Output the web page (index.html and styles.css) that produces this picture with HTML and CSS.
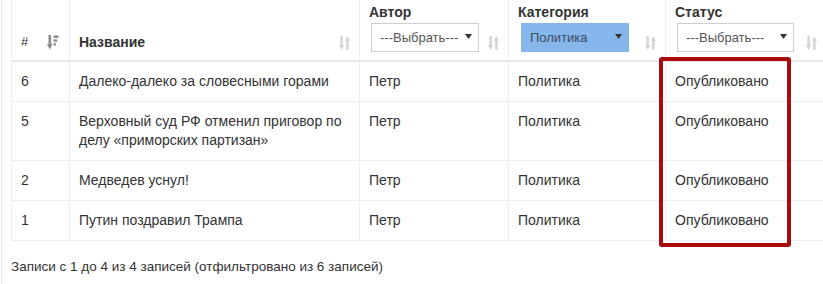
FILE: index.html
```html
<!DOCTYPE html>
<html lang="ru">
<head>
<meta charset="utf-8">
<title>Записи</title>
<link rel="stylesheet" href="styles.css">
</head>
<body>
<div class="page">
  <div class="wrap">
    <table class="grid">
      <colgroup>
        <col class="w-num">
        <col class="w-title">
        <col class="w-author">
        <col class="w-cat">
        <col class="w-status">
      </colgroup>
      <thead>
        <tr>
          <th class="th-num">
            <div class="th-row">
              <span class="hash">#</span>
              <svg class="ico-attr" width="12" height="15" viewBox="0 0 12 15"><rect x="1.5" y="0" width="2.6" height="10" fill="#8a8a8a"/><polygon points="0,9 5.6,9 2.8,14.5" fill="#8a8a8a"/><rect x="6.5" y="0.5" width="5" height="2.4" fill="#8a8a8a"/><rect x="6.5" y="4.3" width="3.8" height="2.4" fill="#8a8a8a"/><rect x="6.5" y="8.1" width="2.4" height="2.4" fill="#8a8a8a"/></svg>
            </div>
          </th>
          <th>
            <div class="th-row">
              <span class="th-title">Название</span>
              <svg class="ico-sort" width="11" height="14" viewBox="0 0 11 14"><rect x="1.4" y="0" width="2.4" height="9.5" fill="#d4d4d4"/><polygon points="0,9 5.2,9 2.6,14" fill="#d4d4d4"/><rect x="7.2" y="4.5" width="2.4" height="9.5" fill="#d4d4d4"/><polygon points="5.8,5 11,5 8.4,0" fill="#d4d4d4"/></svg>
            </div>
          </th>
          <th>
            <div class="th-title">Автор</div>
            <div class="th-row">
              <div class="pick"><span>---Выбрать---</span><svg class="caret" width="7" height="5" viewBox="0 0 7 5"><polygon points="0,0 7,0 3.5,5" fill="#333"/></svg></div>
              <svg class="ico-sort" width="11" height="14" viewBox="0 0 11 14"><rect x="1.4" y="0" width="2.4" height="9.5" fill="#d4d4d4"/><polygon points="0,9 5.2,9 2.6,14" fill="#d4d4d4"/><rect x="7.2" y="4.5" width="2.4" height="9.5" fill="#d4d4d4"/><polygon points="5.8,5 11,5 8.4,0" fill="#d4d4d4"/></svg>
            </div>
          </th>
          <th>
            <div class="th-title">Категория</div>
            <div class="th-row">
              <div class="pick pick-on"><span>Политика</span><svg class="caret" width="7" height="5" viewBox="0 0 7 5"><polygon points="0,0 7,0 3.5,5" fill="#333"/></svg></div>
              <svg class="ico-sort" width="11" height="14" viewBox="0 0 11 14"><rect x="1.4" y="0" width="2.4" height="9.5" fill="#d4d4d4"/><polygon points="0,9 5.2,9 2.6,14" fill="#d4d4d4"/><rect x="7.2" y="4.5" width="2.4" height="9.5" fill="#d4d4d4"/><polygon points="5.8,5 11,5 8.4,0" fill="#d4d4d4"/></svg>
            </div>
          </th>
          <th>
            <div class="th-title">Статус</div>
            <div class="th-row">
              <div class="pick pick-wide"><span>---Выбрать---</span><svg class="caret" width="7" height="5" viewBox="0 0 7 5"><polygon points="0,0 7,0 3.5,5" fill="#333"/></svg></div>
              <svg class="ico-sort" width="11" height="14" viewBox="0 0 11 14"><rect x="1.4" y="0" width="2.4" height="9.5" fill="#d4d4d4"/><polygon points="0,9 5.2,9 2.6,14" fill="#d4d4d4"/><rect x="7.2" y="4.5" width="2.4" height="9.5" fill="#d4d4d4"/><polygon points="5.8,5 11,5 8.4,0" fill="#d4d4d4"/></svg>
            </div>
          </th>
        </tr>
      </thead>
      <tbody>
        <tr><td>6</td><td>Далеко-далеко за словесными горами</td><td>Петр</td><td>Политика</td><td>Опубликовано</td></tr>
        <tr><td>5</td><td>Верховный суд РФ отменил приговор по делу «приморских партизан»</td><td>Петр</td><td>Политика</td><td>Опубликовано</td></tr>
        <tr><td>2</td><td>Медведев уснул!</td><td>Петр</td><td>Политика</td><td>Опубликовано</td></tr>
        <tr><td>1</td><td>Путин поздравил Трампа</td><td>Петр</td><td>Политика</td><td>Опубликовано</td></tr>
      </tbody>
    </table>
    <div class="info">Записи с 1 до 4 из 4 записей (отфильтровано из 6 записей)</div>
  </div>
  <div class="frame"></div>
</div>
</body>
</html>
```

FILE: styles.css
```css
html, body {
  margin: 0;
  padding: 0;
  background: #fff;
  overflow: hidden;
}
body {
  font-family: "Liberation Sans", Arial, sans-serif;
  font-size: 14px;
  color: #333;
}
.page {
  position: relative;
  height: 284px;
}
.wrap {
  margin-left: 1px;
  border-left: 1px solid #ebebeb;
  padding-left: 9px;
  height: 284px;
  box-sizing: border-box;
}
.grid {
  table-layout: fixed;
  border-collapse: collapse;
  width: 815px;
}
.w-num { width: 58px; }
.w-title { width: 290px; }
.w-author { width: 149px; }
.w-cat { width: 157px; }
.w-status { width: 161px; }

.grid th {
  vertical-align: bottom;
  text-align: left;
  font-weight: normal;
  padding: 2px 9px 8px 9px;
  border-left: 1px solid #efefef;
  border-right: 1px solid #efefef;
  border-bottom: 2px solid #e8e8e8;
}
.grid th.th-num {
  padding-right: 10px;
}
.th-title {
  font-weight: bold;
  line-height: 20px;
  color: #333;
}
.th-row {
  display: flex;
  align-items: flex-end;
  justify-content: space-between;
}
.hash {
  font-size: 13px;
  line-height: 20px;
  color: #333;
}
.ico-sort, .ico-attr {
  display: block;
  flex: none;
  margin-bottom: 2px;
}
.pick {
  box-sizing: border-box;
  width: 108px;
  height: 29px;
  margin: 1px 0 0 2px;
  border: 1px solid #cfcfcf;
  background: #fff;
  display: flex;
  align-items: center;
  justify-content: space-between;
  padding: 0 6px 0 8px;
  font-size: 13px;
  font-weight: normal;
  color: #555;
}
.pick-on {
  margin-left: 3px;
  background: #85b7ec;
  border-color: #85b7ec;
  color: #3d4c5e;
}
.pick-wide {
  width: 117px;
}
.caret {
  display: block;
  margin-bottom: 2px;
}
.grid td {
  vertical-align: top;
  padding: 10px 9px;
  line-height: 19px;
  border: 1px solid #efefef;
  border-top: none;
  color: #333;
}
.info {
  margin-top: 16px;
  line-height: 20px;
  font-size: 13.5px;
  color: #333;
}
.frame {
  position: absolute;
  left: 659px;
  top: 57px;
  width: 132px;
  height: 190px;
  box-sizing: border-box;
  border: 4px solid #a80c0c;
  border-radius: 3px;
}
```
